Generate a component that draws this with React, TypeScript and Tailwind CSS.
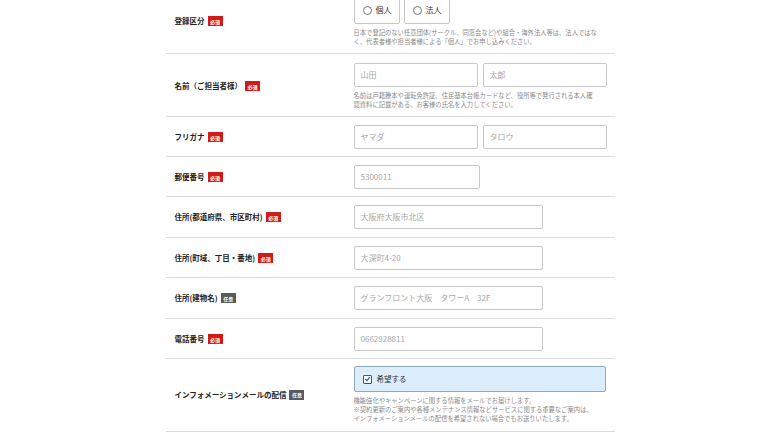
import React from "react";

const FONT = { fontFamily: '"Noto Sans CJK JP", "Noto Sans", sans-serif' };

function Badge({ optional }: { optional?: boolean }) {
  return (
    <span
      className={`ml-[3px] inline-flex h-[10px] w-[15px] items-center justify-center text-[5px] font-bold leading-none text-white ${
        optional ? "bg-[#5a5a5a]" : "bg-[#d11a1a]"
      }`}
    >
      {optional ? "任意" : "必須"}
    </span>
  );
}

function Label({ text, optional }: { text: string; optional?: boolean }) {
  return (
    <div className="flex w-[188px] shrink-0 items-center pl-[9px]">
      <span className="text-[7.5px] font-bold text-[#222]">{text}</span>
      <Badge optional={optional} />
    </div>
  );
}

function Input({ value, w }: { value: string; w: string }) {
  return (
    <div
      className={`flex h-[24px] ${w} items-center rounded-[2px] border border-[#c8c8c8] bg-white pl-[6px] text-[8px] text-[#a8a8a8]`}
    >
      {value}
    </div>
  );
}

function Help({ lines }: { lines: string[] }) {
  return (
    <div className="mt-[4px] text-[6.3px] leading-[9px] text-[#8a8a8a]">
      {lines.map((l, i) => (
        <div key={i} className="whitespace-nowrap">
          {l}
        </div>
      ))}
    </div>
  );
}

function Radio({ text }: { text: string }) {
  return (
    <div className="flex h-[28px] w-[46px] items-center rounded-[2px] border border-[#c8c8c8] bg-white pl-[8px] text-[8px] text-[#333]">
      <span className="mr-[4px] inline-block h-[9px] w-[9px] rounded-full border border-[#777]" />
      {text}
    </div>
  );
}

function SimpleRow({
  label,
  optional,
  children,
  pb,
}: {
  label: string;
  optional?: boolean;
  children: React.ReactNode;
  pb: string;
}) {
  return (
    <div className={`flex border-b border-[#dcdcdc] pt-[8px] ${pb}`}>
      <Label text={label} optional={optional} />
      <div className="flex gap-[5px]">{children}</div>
    </div>
  );
}

export default function App() {
  return (
    <div className="h-[445px] w-[780px] overflow-hidden bg-white" style={FONT}>
      <div className="mx-auto mt-[-4px] w-[449px]">
        {/* Row 1 */}
        <div className="flex border-b border-[#dcdcdc] pb-[7px]">
          <Label text="登録区分" />
          <div>
            <div className="flex gap-[4px]">
              <Radio text="個人" />
              <Radio text="法人" />
            </div>
            <Help
              lines={[
                "日本で登記のない任意団体(サークル、同窓会など)や組合・海外法人等は、法人ではな",
                "く、代表者様や担当者様による「個人」でお申し込みください。",
              ]}
            />
          </div>
        </div>

        {/* Row 2 */}
        <div className="flex border-b border-[#dcdcdc] pb-[7px] pt-[9px]">
          <Label text="名前（ご担当者様）" />
          <div>
            <div className="flex gap-[5px]">
              <Input value="山田" w="w-[124px]" />
              <Input value="太郎" w="w-[124px]" />
            </div>
            <Help
              lines={[
                "名前は戸籍謄本や運転免許証、住民基本台帳カードなど、役所等で発行される本人確",
                "認資料に記載がある、お客様の氏名を入力してください。",
              ]}
            />
          </div>
        </div>

        <SimpleRow label="フリガナ" pb="pb-[7px]">
          <Input value="ヤマダ" w="w-[124px]" />
          <Input value="タロウ" w="w-[124px]" />
        </SimpleRow>
        <SimpleRow label="郵便番号" pb="pb-[7px]">
          <Input value="5300011" w="w-[126px]" />
        </SimpleRow>
        <SimpleRow label="住所(都道府県、市区町村)" pb="pb-[8px]">
          <Input value="大阪府大阪市北区" w="w-[189px]" />
        </SimpleRow>
        <SimpleRow label="住所(町域、丁目・番地)" pb="pb-[7px]">
          <Input value="大深町4-20" w="w-[189px]" />
        </SimpleRow>
        <SimpleRow label="住所(建物名)" optional pb="pb-[8px]">
          <Input value="グランフロント大阪　タワーA　32F" w="w-[189px]" />
        </SimpleRow>
        <SimpleRow label="電話番号" pb="pb-[7px]">
          <Input value="0662928811" w="w-[189px]" />
        </SimpleRow>

        {/* Row 9 */}
        <div className="flex border-b border-[#dcdcdc] pb-[8px] pt-[7px]">
          <Label text="インフォメーションメールの配信" optional />
          <div>
            <div className="flex h-[26px] w-[252px] items-center rounded-[2px] border border-[#8fa9bd] bg-[#dcedfb] pl-[8px] text-[7.5px] text-[#333]">
              <span className="mr-[5px] flex h-[9px] w-[9px] items-center justify-center rounded-[1px] border border-[#555] bg-white">
                <svg viewBox="0 0 10 10" className="h-[8px] w-[8px]">
                  <path d="M2 5.2 L4.2 7.4 L8.3 2.4" fill="none" stroke="#1d5fa8" strokeWidth="1.8" />
                </svg>
              </span>
              希望する
            </div>
            <Help
              lines={[
                "機能強化やキャンペーンに関する情報をメールでお届けします。",
                "\u203B\uFE0E契約更新のご案内や各種メンテナンス情報などサービスに関する重要なご案内は、",
                "インフォメーションメールの配信を希望されない場合でもお送りいたします。",
              ]}
            />
          </div>
        </div>
      </div>
    </div>
  );
}
